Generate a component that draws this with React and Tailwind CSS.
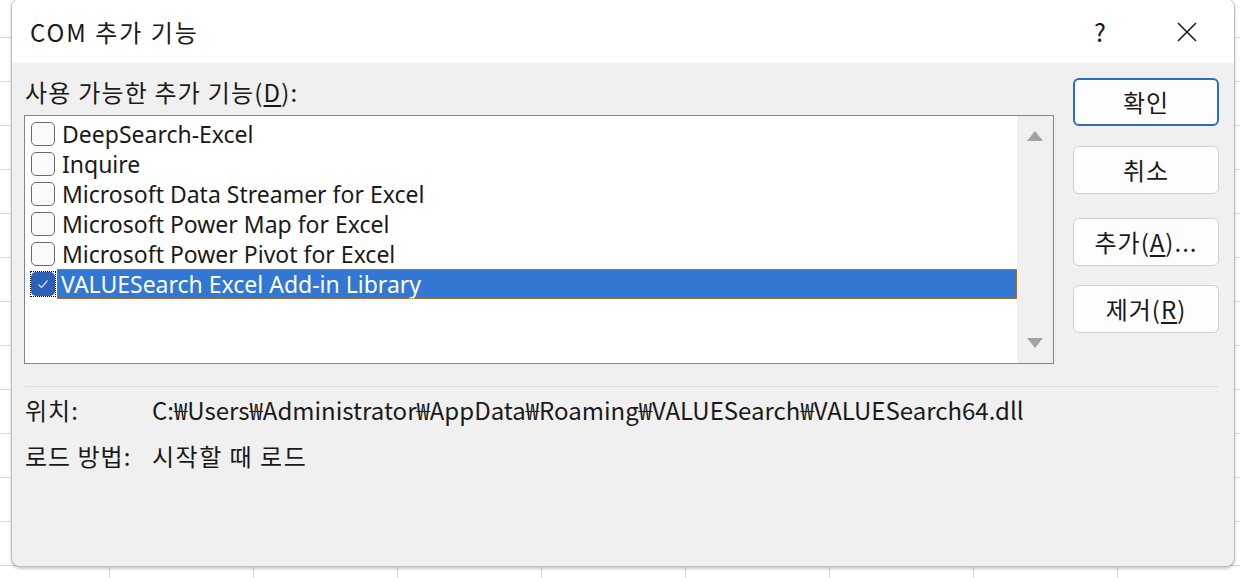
import React from "react";

const ko = { fontFamily: '"Noto Sans CJK KR", "Noto Sans", sans-serif' };
const latin = { fontFamily: '"Noto Sans", sans-serif' };

function CheckBox({ checked }) {
  if (checked) {
    return (
      <div className="w-[26px] h-[26px] p-[1px] outline outline-1 outline-dotted outline-black -outline-offset-1 flex items-center justify-center shrink-0">
        <div className="w-[24px] h-[24px] rounded-[5px] bg-[#2b60b9] flex items-center justify-center">
          <svg width="14" height="14" viewBox="0 0 14 14" fill="none">
            <path d="M2.5 7.5 L5.5 10.5 L11.5 3.5" stroke="#c9d8f2" strokeWidth="1.3" />
          </svg>
        </div>
      </div>
    );
  }
  return (
    <div className="w-[26px] h-[26px] flex items-center justify-center shrink-0">
      <div className="w-[24px] h-[24px] rounded-[5px] border-[1.5px] border-[#6a6a6a] bg-[#fafafa]" />
    </div>
  );
}

function Button({ children, primary }) {
  return (
    <button
      className={
        primary
          ? "w-[146px] h-[48px] rounded-[6px] border-2 border-[#2a6fc6] bg-[#fdfdfd] text-[24px] tracking-[1px] text-[#1a1a1a] flex items-center justify-center"
          : "w-[146px] h-[48px] rounded-[6px] border border-[#d0d0d0] bg-[#fdfdfd] text-[24px] tracking-[1px] text-[#1a1a1a] flex items-center justify-center"
      }
      style={ko}
    >
      {children}
    </button>
  );
}

export default function App() {
  const items = [
    "DeepSearch-Excel",
    "Inquire",
    "Microsoft Data Streamer for Excel",
    "Microsoft Power Map for Excel",
    "Microsoft Power Pivot for Excel",
  ];

  return (
    <div className="relative w-[1240px] h-[578px] overflow-hidden bg-white bg-[linear-gradient(to_right,#d6d6d6_1px,transparent_1px),linear-gradient(to_bottom,#d6d6d6_1px,transparent_1px)] bg-[size:144px_44px] bg-[position:109px_37px]">
      <div className="absolute left-[11px] top-[-2px] w-[1224px] h-[569px] rounded-[9px] border border-[#bdbdbd] shadow-[0_2px_3px_rgba(0,0,0,0.2)] overflow-hidden flex flex-col bg-[#f0f0f0]">
        {/* title bar */}
        <div className="h-[64px] shrink-0 bg-white flex items-center pt-[2px]">
          <div className="pl-[18px] text-[24px] tracking-[2px] text-[#1a1a1a]" style={ko}>
            COM 추가 기능
          </div>
          <div className="ml-auto flex items-center">
            <span className="w-[40px] text-center text-[25px] text-[#1a1a1a]" style={ko}>
              ?
            </span>
            <span className="w-[90px] flex justify-center pr-[4px] ml-[24px]">
              <svg width="22" height="22" viewBox="0 0 22 22">
                <path d="M2 2 L20 20 M20 2 L2 20" stroke="#1a1a1a" strokeWidth="1.6" />
              </svg>
            </span>
          </div>
        </div>

        {/* body */}
        <div className="flex-1 pl-[12px] pr-[14px] pt-[15px]" style={ko}>
          <div className="flex gap-[19px]">
            <div className="w-[1030px]">
              <div className="text-[24px] tracking-[1.2px] leading-[28px] h-[37px] pl-[1px] text-[#1a1a1a]">
                사용 가능한 추가 기능(<span className="underline underline-offset-[3px]">D</span>):
              </div>
              <div className="h-[249px] border border-[#7f8591] bg-white flex">
                <div className="flex-1 pt-[3px]">
                  {items.map((t) => (
                    <div key={t} className="h-[30px] flex items-center pl-[5px]">
                      <CheckBox />
                      <span className="ml-[6px] text-[23px] text-[#1a1a1a]" style={latin}>
                        {t}
                      </span>
                    </div>
                  ))}
                  <div className="h-[30px] flex items-center pl-[5px]">
                    <CheckBox checked />
                    <span
                      className="ml-[1px] flex-1 h-[30px] flex items-center pl-[4px] bg-[#3177d3] text-white text-[23px] outline outline-1 outline-dotted outline-[#b07a3c] -outline-offset-1"
                      style={latin}
                    >
                      VALUESearch Excel Add-in Library
                    </span>
                  </div>
                </div>
                <div className="w-[36px] bg-[#f0f0f0] flex flex-col items-center justify-between py-[15px]">
                  <svg width="16" height="10" viewBox="0 0 16 10">
                    <path d="M8 0 L16 10 L0 10 Z" fill="#a3a3a3" />
                  </svg>
                  <svg width="16" height="10" viewBox="0 0 16 10">
                    <path d="M0 0 L16 0 L8 10 Z" fill="#a3a3a3" />
                  </svg>
                </div>
              </div>
            </div>

            <div className="flex flex-col gap-[20px]">
              <Button primary>확인</Button>
              <Button>취소</Button>
              <div className="mt-[4px] mb-[-1px]">
                <Button>
                  추가(<span className="underline underline-offset-[3px]">A</span>)...
                </Button>
              </div>
              <Button>
                제거(<span className="underline underline-offset-[3px]">R</span>)
              </Button>
            </div>
          </div>

          <div className="mt-[22px] ml-[1px] mr-[2px] h-px bg-[#dcdcdc]" />

          <div className="pl-[1px] pt-[6px] text-[24px] text-[#1a1a1a]">
            <div className="flex h-[34px] items-center">
              <span className="w-[127px] tracking-[1px]">위치:</span>
              <span>C:₩Users₩Administrator₩AppData₩Roaming₩VALUESearch₩VALUESearch64.dll</span>
            </div>
            <div className="flex h-[34px] items-center mt-[12px]">
              <span className="w-[127px] tracking-[1px]">로드 방법:</span>
              <span className="tracking-[1.5px]">시작할 때 로드</span>
            </div>
          </div>
        </div>
      </div>
    </div>
  );
}
